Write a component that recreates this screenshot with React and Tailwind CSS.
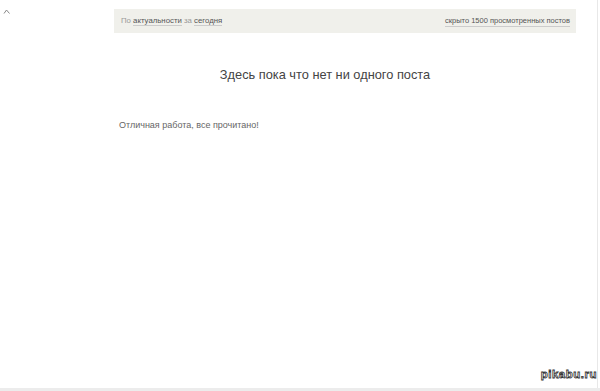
export default function App() {
  return (
    <div className="relative w-[600px] h-[391px] bg-white overflow-hidden font-['Liberation_Sans',sans-serif] border-b-[3px] border-[#ececec]">
      <div className="flex h-full pr-[21px] border-r border-[#e8e8e8] mr-[2px]">
        <div className="w-[114px] shrink-0 pl-[3px] pt-[9px]">
          <svg width="8" height="5" viewBox="0 0 8 5" fill="none" stroke="#888" strokeWidth="1">
            <polyline points="1,4.5 3.5,1 6.5,4.5" />
          </svg>
        </div>
        <div className="flex-1 flex flex-col pt-[9px]">
          <div className="h-[24px] bg-[#f0f0eb] flex items-center justify-between pl-[7px] pr-[6px] text-[7.8px] text-[#999]">
            <div>
              По <span className="text-[#555] border-b border-[#ccc]">актуальности</span> за{" "}
              <span className="text-[#555] border-b border-[#ccc]">сегодня</span>
            </div>
            <span className="text-[#555] border-b border-[#ccc] text-[7.5px]">скрыто 1500 просмотренных постов</span>
          </div>
          <div className="mt-[32px] text-center text-[12.8px] text-[#444] pr-[40px]">
            Здесь пока что нет ни одного поста
          </div>
          <div className="mt-[35px] pl-[5px] text-[9px] text-[#666]">Отличная работа, все прочитано!</div>
        </div>
      </div>
      <div className="absolute right-[3px] bottom-[5px] text-[11.5px] font-bold text-white [-webkit-text-stroke:0.8px_#333] tracking-[0.5px]">
        pikabu.ru
      </div>
    </div>
  );
}
